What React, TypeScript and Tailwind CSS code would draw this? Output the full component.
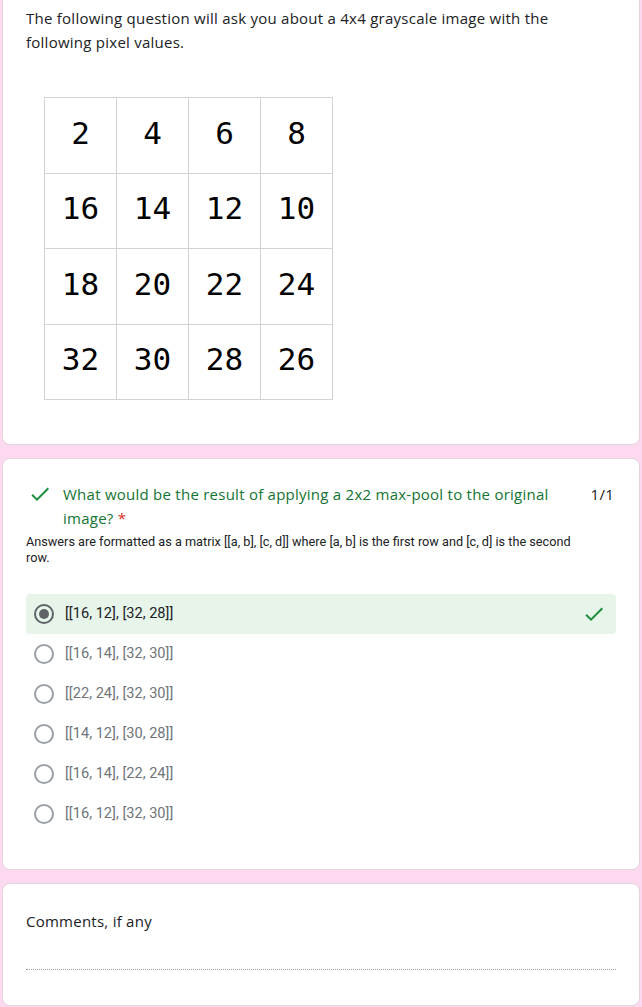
import { useState } from "react";

const grid = [
  [2, 4, 6, 8],
  [16, 14, 12, 10],
  [18, 20, 22, 24],
  [32, 30, 28, 26],
];

const options = [
  "[[16, 12], [32, 28]]",
  "[[16, 14], [32, 30]]",
  "[[22, 24], [32, 30]]",
  "[[14, 12], [30, 28]]",
  "[[16, 14], [22, 24]]",
  "[[16, 12], [32, 30]]",
];

function Check({ className }: { className: string }) {
  return (
    <svg viewBox="0 0 24 24" className={className} fill="currentColor">
      <path d="M9 16.17L4.83 12l-1.42 1.41L9 19 21 7l-1.41-1.41z" />
    </svg>
  );
}

export default function App() {
  const [selected] = useState(0);

  return (
    <div className="bg-[#fdd9ef] px-[2px] pb-[3px] flex flex-col gap-[13px] font-['Open_Sans',sans-serif] text-[#202124] tracking-[0.25px]">
      {/* Intro card */}
      <div className="-mt-[18px] bg-white border border-[#e3d3dd] rounded-lg px-[23px] pt-[23px] pb-[44px]">
        <p className="text-[15px] leading-6 pr-[60px]">
          The following question will ask you about a 4x4 grayscale image with the
          following pixel values.
        </p>

        <table className="mt-[43px] ml-[18px] border-collapse font-['DejaVu_Sans_Mono',monospace] text-[31px] tracking-normal text-black">
          <tbody>
            {grid.map((row, i) => (
              <tr key={i}>
                {row.map((v) => (
                  <td
                    key={v}
                    className="border border-[#d3d3d3] w-[72px] h-[75.5px] pb-[5px] text-center align-middle"
                  >
                    {v}
                  </td>
                ))}
              </tr>
            ))}
          </tbody>
        </table>
      </div>

      {/* Question card */}
      <div className="bg-white border border-[#e3d3dd] rounded-lg px-[23px] pt-[23px] pb-[35px]">
        <div className="flex">
          <Check className="w-6 h-6 shrink-0 ml-[2px] text-[#1e8e3e]" />
          <div className="ml-[11px] flex-1 text-[15px] leading-6 text-[#137333]">
            What would be the result of applying a 2x2 max-pool to the original image?{" "}
            <span className="text-[#d93025]">*</span>
          </div>
          <div className="w-[50px] text-right pr-[2px] text-[15px] leading-6">1/1</div>
        </div>
        <p className="mt-[4px] text-[12.7px] leading-4 tracking-normal pr-[30px] font-['Roboto',sans-serif]">
          Answers are formatted as a matrix [[a, b], [c, d]] where [a, b] is the first row
          and [c, d] is the second row.
        </p>

        <div className="mt-[28px] flex flex-col font-['Roboto',sans-serif] tracking-normal">
          {options.map((o, i) => (
            <div
              key={o}
              className={`h-10 flex items-center pl-2 pr-[10px] rounded ${
                i === selected ? "bg-[#e6f4ea]" : ""
              }`}
            >
              {i === selected ? (
                <span className="w-5 h-5 rounded-full border-2 border-[#5f6368] flex items-center justify-center">
                  <span className="w-[10px] h-[10px] rounded-full bg-[#5f6368]" />
                </span>
              ) : (
                <span className="w-5 h-5 rounded-full border-2 border-[#9aa0a6]" />
              )}
              <span
                className={`ml-[11px] flex-1 text-[14.6px] ${
                  i === selected ? "text-[#202124]" : "text-[#70757a]"
                }`}
              >
                {o}
              </span>
              {i === selected && <Check className="w-6 h-6 text-[#1e8e3e]" />}
            </div>
          ))}
        </div>
      </div>

      {/* Comments card */}
      <div className="bg-white border border-[#e3d3dd] rounded-lg px-[23px] pt-[25px] pb-[35px]">
        <div className="text-[15px] leading-6">Comments, if any</div>
        <div className="mt-[36px] border-b border-dotted border-[#9aa0a6]" />
      </div>
    </div>
  );
}
